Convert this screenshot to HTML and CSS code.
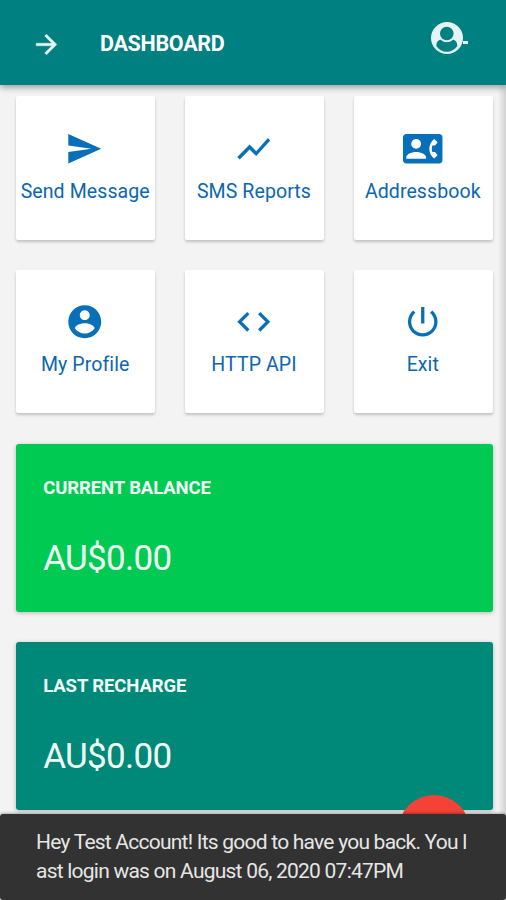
FILE: index.html
```html
<!DOCTYPE html>
<html lang="en">
<head>
	<meta charset="utf-8">
	<title>Dashboard</title>
	<link rel="stylesheet" href="styles.css">
</head>
<body>
<div class="app">
	<header class="navbar">
		<svg class="nav-arrow" viewBox="0 0 24 24"><path d="M12 4l-1.41 1.41L16.17 11H4v2h12.17l-5.58 5.59L12 20l8-8z"/></svg>
		<h1 class="nav-title">DASHBOARD</h1>
		<a class="nav-user" href="#">
			<svg viewBox="0 0 32 32"><circle cx="16" cy="16" r="16"/><path class="cut" d="M10 17.400C7 17.800 5.300 20 5.300 24c2.600 3.900 6.300 5.800 10.500 5.800s8-1.900 10.500-5.800c0-4-1.700-6.200-4.700-6.600z"/><circle cx="15.800" cy="11.500" r="8.700"/><circle class="cut" cx="15.800" cy="11.500" r="6.800"/></svg>
			<span class="dash"></span>
		</a>
	</header>
	<main class="content">
		<div class="tiles">
			<a class="tile" href="#">
				<svg viewBox="0 0 24 24"><path d="M2.010 21L22 12 2.010 3 2 10l14 2-14 2z"/></svg>
				<span>Send Message</span>
			</a>
			<a class="tile" href="#">
				<svg viewBox="0 0 24 24"><path d="M3.500 18.490l6-6.010 4 4L22 6.920l-1.410-1.410-7.090 7.970-4-4L2 16.990z"/></svg>
				<span>SMS Reports</span>
			</a>
			<a class="tile" href="#">
				<svg viewBox="0 0 24 24"><path d="M22 3H2C.9 3 0 3.900 0 5v14c0 1.100.9 2 2 2h20c1.100 0 1.990-.9 1.990-2L24 5c0-1.100-.9-2-2-2zM8 6c1.660 0 3 1.340 3 3s-1.340 3-3 3-3-1.340-3-3 1.340-3 3-3zm6 12H2v-1c0-2 4-3.100 6-3.100s6 1.100 6 3.100v1zm3.850-4h1.640L21 16l-1.990 1.990c-1.310-.98-2.280-2.380-2.730-3.990-.18-.64-.28-1.310-.28-2s.1-1.360.28-2c.45-1.620 1.420-3.010 2.730-3.990L21 8l-1.510 2h-1.640c-.22.630-.35 1.300-.35 2s.13 1.370.35 2z"/></svg>
				<span>Addressbook</span>
			</a>
			<a class="tile" href="#">
				<svg viewBox="0 0 24 24"><path d="M12 2C6.480 2 2 6.480 2 12s4.480 10 10 10 10-4.480 10-10S17.520 2 12 2zm0 3c1.660 0 3 1.340 3 3s-1.340 3-3 3-3-1.340-3-3 1.340-3 3-3zm0 14.200c-2.500 0-4.710-1.280-6-3.220.03-1.990 4-3.080 6-3.080 1.990 0 5.970 1.090 6 3.080-1.290 1.940-3.500 3.220-6 3.220z"/></svg>
				<span>My Profile</span>
			</a>
			<a class="tile" href="#">
				<svg viewBox="0 0 24 24"><path d="M9.400 16.600L4.800 12l4.600-4.600L8 6l-6 6 6 6 1.400-1.400zm5.200 0l4.600-4.600-4.600-4.600L16 6l6 6-6 6-1.400-1.400z"/></svg>
				<span>HTTP API</span>
			</a>
			<a class="tile" href="#">
				<svg viewBox="0 0 24 24"><path d="M13 3h-2v10h2V3zm4.830 2.170l-1.420 1.420C17.990 7.860 19 9.810 19 12c0 3.870-3.130 7-7 7s-7-3.130-7-7c0-2.190 1.010-4.140 2.580-5.420L6.170 5.170C4.230 6.820 3 9.260 3 12c0 4.970 4.030 9 9 9s9-4.030 9-9c0-2.740-1.230-5.180-3.170-6.830z"/></svg>
				<span>Exit</span>
			</a>
		</div>
		<section class="card green">
			<h2>CURRENT BALANCE</h2>
			<p>AU$0.00</p>
		</section>
		<section class="card teal">
			<h2>LAST RECHARGE</h2>
			<p>AU$0.00</p>
		</section>
	</main>
	<div class="edge"></div>
	<div class="fab"></div>
	<div class="toast">Hey Test Account! Its good to have you back. You l<br>ast login was on August 06, 2020 07:47PM</div>
</div>
</body>
</html>
```
FILE: styles.css
```css
* { box-sizing: border-box; }
body { margin: 0; background: #f3f3f3; font-family: Roboto, "Liberation Sans", sans-serif; }
h1, h2, p { margin: 0; }
a { text-decoration: none; }
svg { display: block; }

.app { position: relative; width: 506px; height: 900px; overflow: hidden; }

/* top bar */
.navbar { position: relative; z-index: 2; display: flex; align-items: center; height: 85px; padding: 3px 38px 0 31px; background: #008080; box-shadow: 0 2px 7px rgba(0,0,0,.4); }
.nav-arrow { width: 31px; height: 31px; fill: #e9f6f5; stroke: #e9f6f5; stroke-width: .3; }
.nav-title { margin-left: 38px; color: #fff; font-size: 21.5px; font-weight: 700; line-height: 30px; letter-spacing: -.3px; }
.nav-user { display: flex; align-items: center; margin: 0 0 13px auto; }
.nav-user svg { width: 32px; height: 32px; fill: #e4f4f4; }
.nav-user .cut { fill: #008080; }
.nav-user .dash { width: 5px; height: 3px; margin-top: 10px; background: #e4f4f4; }

/* menu tiles */
.content { padding: 11px 13.5px 0 16.2px; }
.tiles { display: grid; grid-template-columns: repeat(3, 139px); grid-auto-rows: 143.5px; gap: 30px 29.8px; }
.tile { display: flex; flex-direction: column; align-items: center; padding-top: 32.5px; background: #fff; border-radius: 2px; box-shadow: 0 2px 3px rgba(0,0,0,.2); color: #0c66b2; }
.tile svg { width: 39.5px; height: 39.5px; margin-left: -1px; fill: #0870b8; }
.tile span { margin-top: 11.5px; margin-left: -1px; font-size: 19.5px; line-height: 24px; letter-spacing: .1px; white-space: nowrap; }

/* balance cards */
.card { height: 168px; margin-top: 30.5px; padding: 31px 27px 0; border-radius: 3px; box-shadow: 0 1px 4px rgba(0,0,0,.25); color: #f0fff6; }
.card h2 { font-size: 18.5px; font-weight: 700; line-height: 26px; letter-spacing: -.1px; }
.card p { margin-top: 37px; font-size: 35px; line-height: 42px; letter-spacing: -.7px; }
.green { background: #00ca52; }
.teal { background: #008878; }

.edge { position: absolute; top: 85px; right: 0; bottom: 0; width: 8px; background: linear-gradient(to right, rgba(0,0,0,0), rgba(0,0,0,.14)); }
.fab { position: absolute; top: 795px; left: 398px; width: 72px; height: 72px; border-radius: 50%; background: #f44336; }

.toast { position: absolute; left: 0; right: 0; bottom: 0; height: 86px; padding: 14px 0 0 36px; background: #323232; border-radius: 3px; box-shadow: 0 -1px 3px rgba(0,0,0,.3); color: #e6e6e6; font-size: 21px; line-height: 29px; letter-spacing: -.77px; white-space: nowrap; }
```
